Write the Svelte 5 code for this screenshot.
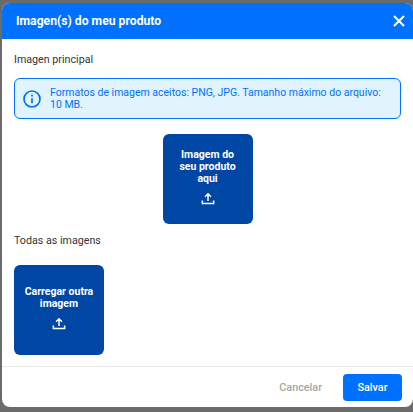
<script>
  const upload = "M12 5v9.5M8 9l4-4 4 4M4.5 14v4h15v-4";
</script>

<div class="backdrop">
  <div class="modal">
    <header class="head">
      <h1>Imagen(s) do meu produto</h1>
      <svg class="close" viewBox="0 0 12 12" aria-label="Fechar"><path d="M1 1l10 10M11 1L1 11" /></svg>
    </header>
    <main class="body">
      <p class="label">Imagen principal</p>
      <div class="info">
        <svg class="info-icon" viewBox="0 0 20 20">
          <circle cx="10" cy="10" r="8" />
          <path d="M10 9.2v5M10 5.6v1.8" />
        </svg>
        <p>Formatos de imagem aceitos: PNG, JPG. Tamanho máximo do arquivo: 10 MB.</p>
      </div>
      <div class="center">
        <button class="tile">
          <span>Imagem do seu produto aqui</span>
          <svg viewBox="0 0 24 24"><path d={upload} /></svg>
        </button>
      </div>
      <p class="label second">Todas as imagens</p>
      <button class="tile other">
        <span>Carregar outra imagem</span>
        <svg viewBox="0 0 24 24"><path d={upload} /></svg>
      </button>
    </main>
    <footer class="foot">
      <button class="cancel">Cancelar</button>
      <button class="save">Salvar</button>
    </footer>
  </div>
</div>

<style>
  :global(body) {
    margin: 0;
    background: #6b6b6b;
    font-family: Roboto, "Liberation Sans", sans-serif;
  }
  .backdrop {
    width: 413px;
    height: 412px;
    box-sizing: border-box;
    padding: 3px 0 5px 2px;
    overflow: hidden;
  }
  .modal {
    height: 404px;
    width: 411px;
    background: #fff;
    border-radius: 8px;
    overflow: hidden;
    display: flex;
    flex-direction: column;
  }
  .head {
    height: 36px;
    flex: none;
    background: #0070ff;
    color: #fff;
    display: flex;
    align-items: center;
    justify-content: space-between;
    padding: 0 8px 0 14px;
  }
  h1 {
    margin: 0;
    font-size: 12.2px;
    font-weight: 700;
  }
  .close {
    width: 12px;
    height: 12px;
    fill: none;
    stroke: #fff;
    stroke-width: 2;
  }
  .body {
    flex: 1;
    padding: 14px 12px 0;
    display: flex;
    flex-direction: column;
    align-items: stretch;
  }
  .label {
    margin: 0;
    font-size: 10.7px;
    line-height: 14px;
    color: #333;
  }
  .info {
    margin-top: 11px;
    height: 41px;
    box-sizing: border-box;
    border: 1px solid #0070ff;
    border-radius: 6px;
    background: #e1f3fd;
    display: flex;
    align-items: center;
    gap: 8px;
    padding: 0 8px 0 7px;
    color: #0070ff;
  }
  .info p {
    margin: 0;
    font-size: 10.5px;
    line-height: 12px;
  }
  .info-icon {
    width: 20px;
    height: 20px;
    flex: none;
    fill: none;
    stroke: #0070ff;
    stroke-width: 1.7;
  }
  .center {
    display: flex;
    justify-content: center;
    margin-top: 15px;
  }
  .tile {
    width: 90px;
    height: 90px;
    border: 0;
    border-radius: 6px;
    background: #0047a5;
    color: #fff;
    display: flex;
    flex-direction: column;
    align-items: center;
    justify-content: center;
    gap: 5px;
    padding: 0 10px 2px;
    font-family: inherit;
    font-size: 10.5px;
    font-weight: 700;
    line-height: 12px;
    text-align: center;
  }
  .tile svg {
    width: 18px;
    height: 18px;
    fill: none;
    stroke: #fff;
    stroke-width: 2;
  }
  .second {
    margin-top: 10px;
  }
  .other {
    margin-top: 17px;
    padding: 0 6px 2px;
  }
  .foot {
    height: 40px;
    flex: none;
    border-top: 1px solid #e8e8e8;
    display: flex;
    align-items: center;
    justify-content: flex-end;
    gap: 21px;
    padding: 0 11px;
  }
  .foot button {
    border: 0;
    font-family: inherit;
    font-size: 10.8px;
    font-weight: 500;
  }
  .cancel {
    background: none;
    color: #a6a6a6;
    padding: 0;
  }
  .save {
    width: 59px;
    height: 27px;
    border-radius: 4px;
    background: #0070ff;
    color: #fff;
  }
</style>
